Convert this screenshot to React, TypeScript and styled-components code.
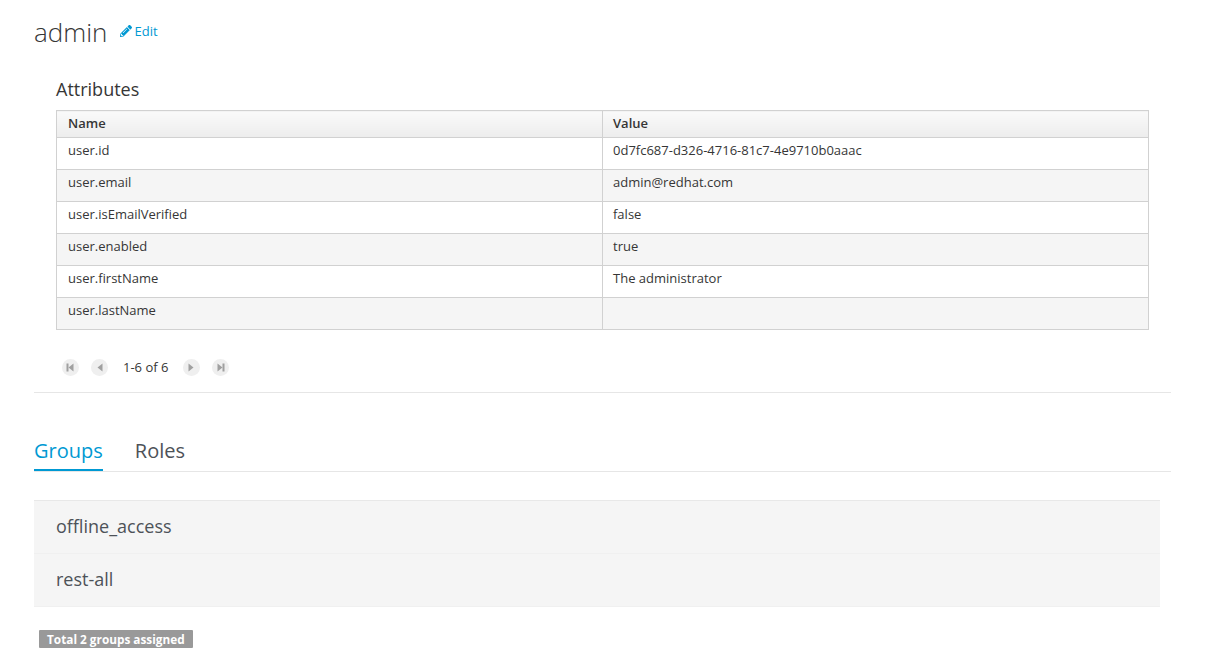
import React from "react";
import styled, { createGlobalStyle } from "styled-components";
import { FaPencilAlt } from "react-icons/fa";

const Global = createGlobalStyle`
  html, body { margin: 0; padding: 0; background: #fff; }
  body { font-family: "Open Sans", "Liberation Sans", sans-serif; font-size: 13px; color: #363636; line-height: 18px; }
`;

const Page = styled.div`
  width: 1137px;
  padding: 0 48px 0 34px;
  height: 663px;
  overflow: hidden;
`;

const TitleRow = styled.div`
  display: flex;
  align-items: baseline;
  height: 67px;
  padding-top: 14px;
  box-sizing: border-box;
`;

const Title = styled.h1`
  margin: 0;
  font-size: 26px;
  line-height: 36px;
  font-weight: 300;
  color: #363636;
`;

const EditLink = styled.a`
  display: inline-flex;
  align-items: center;
  gap: 2px;
  margin-left: 13px;
  font-size: 13px;
  color: #0099d3;
  position: relative;
  top: -5px;
`;

const Section = styled.section`
  padding-left: 22px;
  width: 1093px;
`;

const SectionTitle = styled.h2`
  margin: 0;
  font-size: 18px;
  line-height: 24px;
  font-weight: 400;
  color: #363636;
  height: 43px;
  padding-top: 10px;
  box-sizing: border-box;
`;

const Table = styled.table`
  width: 1093px;
  border-collapse: collapse;
  table-layout: fixed;
  border: 1px solid #d1d1d1;
`;

const HeadCell = styled.th`
  height: 27px;
  padding: 0 10px 2px;
  box-sizing: border-box;
  text-align: left;
  font-size: 13px;
  font-weight: 600;
  color: #363636;
  background: linear-gradient(to bottom, #fafafa 0%, #ededed 100%);
  border: 1px solid #d1d1d1;
  &:first-child { padding-left: 11px; }
`;

const Row = styled.tr<{ $striped: boolean }>`
  background: ${(p) => (p.$striped ? "#f5f5f5" : "#fff")};
`;

const Cell = styled.td`
  height: 32px;
  padding: 3px 10px 0;
  box-sizing: border-box;
  vertical-align: top;
  border: 1px solid #d1d1d1;
  font-size: 13px;
  line-height: 18px;
  color: #363636;
  &:first-child { padding-left: 11px; }
`;

const Pager = styled.div`
  display: flex;
  align-items: center;
  height: 62px;
  box-sizing: border-box;
  padding: 12px 0 0 6px;
  gap: 12px;
`;

const PagerText = styled.span`
  margin: 0 3px;
  font-size: 13px;
  color: #363636;
`;

const PagerBtn = styled.span`
  width: 17px;
  height: 17px;
  border-radius: 50%;
  background: #efefef;
  display: flex;
  align-items: center;
  justify-content: center;
`;

const Divider = styled.hr`
  margin: 0;
  border: 0;
  border-top: 1px solid #e6e6e6;
`;

const Tabs = styled.nav`
  display: flex;
  gap: 32px;
  margin-top: 40px;
  border-bottom: 1px solid #e6e6e6;
  height: 38px;
`;

const Tab = styled.a<{ $active?: boolean }>`
  font-size: 20px;
  line-height: 36px;
  height: 38px;
  box-sizing: border-box;
  color: ${(p) => (p.$active ? "#0099d3" : "#4d5258")};
  border-bottom: ${(p) => (p.$active ? "2px solid #0099d3" : "none")};
`;

const GroupList = styled.ul`
  list-style: none;
  margin: 28px 0 0;
  padding: 0;
  width: 1126px;
  background: #f5f5f5;
  border-top: 1px solid #e8e8e8;
`;

const GroupItem = styled.li`
  height: 53px;
  box-sizing: border-box;
  padding: 0 22px 2px;
  display: flex;
  align-items: center;
  font-size: 18px;
  color: #4d5258;
  border-bottom: 1px solid #f0f0f0;
`;

const Total = styled.span`
  display: inline-block;
  margin: 23px 0 0 5px;
  padding: 0 8px;
  height: 18px;
  line-height: 18px;
  background: #999;
  color: #fff;
  font-size: 11.8px;
  font-weight: 700;
  border-radius: 1px;
`;

const PagerIcon = ({ dir, bar }: { dir: "l" | "r"; bar?: boolean }) => (
  <svg width="9" height="9" viewBox="0 0 9 9" fill="#a0a0a0">
    {dir === "l" ? <path d="M7.5 0.5v8L2.5 4.5z" /> : <path d="M1.5 0.5v8l5-4z" />}
    {bar && (dir === "l" ? <rect x="0.5" y="0.5" width="2" height="8" /> : <rect x="6.5" y="0.5" width="2" height="8" />)}
  </svg>
);

const rows: [string, string][] = [
  ["user.id", "0d7fc687-d326-4716-81c7-4e9710b0aaac"],
  ["user.email", "admin@redhat.com"],
  ["user.isEmailVerified", "false"],
  ["user.enabled", "true"],
  ["user.firstName", "The administrator"],
  ["user.lastName", ""],
];

export default function App() {
  return (
    <Page>
      <Global />
      <TitleRow>
        <Title>admin</Title>
        <EditLink>
          <FaPencilAlt size={12} color="#0099d3" />
          Edit
        </EditLink>
      </TitleRow>
      <Section>
        <SectionTitle>Attributes</SectionTitle>
        <Table>
          <colgroup>
            <col width="546" />
            <col />
          </colgroup>
          <thead>
            <tr>
              <HeadCell>Name</HeadCell>
              <HeadCell>Value</HeadCell>
            </tr>
          </thead>
          <tbody>
            {rows.map(([n, v], i) => (
              <Row key={n} $striped={i % 2 === 1}>
                <Cell>{n}</Cell>
                <Cell>{v}</Cell>
              </Row>
            ))}
          </tbody>
        </Table>
        <Pager>
          <PagerBtn><PagerIcon dir="l" bar /></PagerBtn>
          <PagerBtn><PagerIcon dir="l" /></PagerBtn>
          <PagerText>1-6 of 6</PagerText>
          <PagerBtn><PagerIcon dir="r" /></PagerBtn>
          <PagerBtn><PagerIcon dir="r" bar /></PagerBtn>
        </Pager>
      </Section>
      <Divider />
      <Tabs>
        <Tab $active>Groups</Tab>
        <Tab>Roles</Tab>
      </Tabs>
      <GroupList>
        <GroupItem>offline_access</GroupItem>
        <GroupItem>rest-all</GroupItem>
      </GroupList>
      <Total>Total 2 groups assigned</Total>
    </Page>
  );
}
